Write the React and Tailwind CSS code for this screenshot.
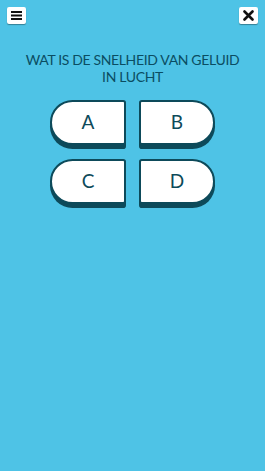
const Option = ({ label, side }) => (
  <button
    className={
      "h-[45px] w-[76px] bg-white border-2 border-[#0d4a5a] shadow-[0_4px_0_#0d4a5a] flex items-center justify-center text-[19px] font-normal text-[#0d4a5a] " +
      (side === "left" ? "rounded-l-[24px] rounded-r-[3px]" : "rounded-r-[24px] rounded-l-[3px]")
    }
  >
    {label}
  </button>
);

export default function App() {
  return (
    <div className="w-[265px] h-[471px] bg-[#4ec3e6] font-['Lato',sans-serif] overflow-hidden">
      <div className="flex justify-between px-[7px] pt-[7px]">
        <button className="w-[19px] h-[17px] bg-white rounded-[2px] shadow-[0_1px_1px_rgba(0,0,0,0.35)] flex items-center justify-center">
          <svg width="11" height="9" viewBox="0 0 11 9">
            <rect x="0" y="0" width="11" height="2" fill="#111" />
            <rect x="0" y="3.5" width="11" height="2" fill="#111" />
            <rect x="0" y="7" width="11" height="2" fill="#111" />
          </svg>
        </button>
        <button className="w-[19px] h-[17px] bg-white rounded-[2px] shadow-[0_1px_1px_rgba(0,0,0,0.35)] flex items-center justify-center">
          <svg width="11" height="11" viewBox="0 0 11 11">
            <path d="M1.5 1.5 L9.5 9.5 M9.5 1.5 L1.5 9.5" stroke="#111" strokeWidth="2.6" strokeLinecap="round" />
          </svg>
        </button>
      </div>

      <h1 className="mt-[27px] text-center text-[14px] leading-[17px] text-[#0b4d62] tracking-[-0.35px]">
        WAT IS DE SNELHEID VAN GELUID
        <br />
        IN LUCHT
      </h1>

      <div className="mt-[15px] grid grid-cols-[76px_76px] gap-x-[13px] gap-y-[14px] justify-center">
        <Option label="A" side="left" />
        <Option label="B" side="right" />
        <Option label="C" side="left" />
        <Option label="D" side="right" />
      </div>
    </div>
  );
}
